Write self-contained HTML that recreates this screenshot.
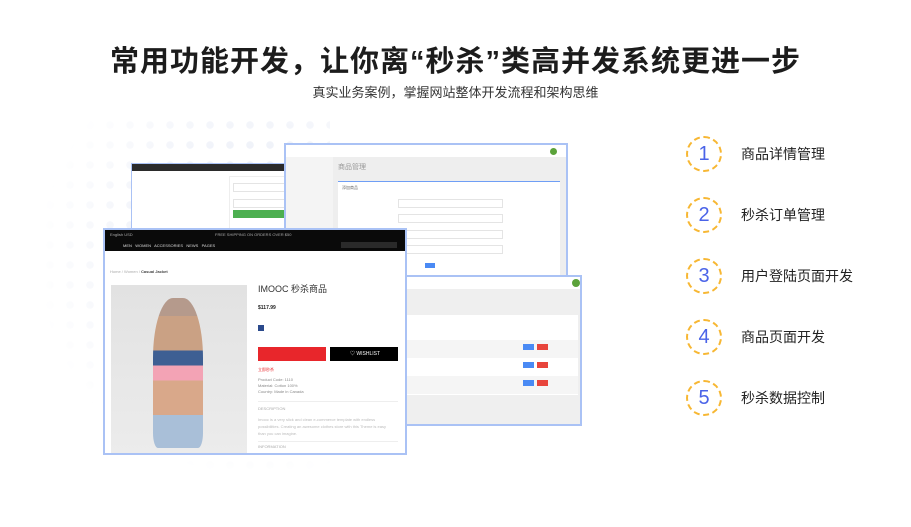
<!DOCTYPE html>
<html><head><meta charset="utf-8"><style>
*{margin:0;padding:0;box-sizing:border-box}
body{width:911px;height:527px;background:#fff;position:relative;overflow:hidden;font-family:"Liberation Sans","Noto Sans CJK SC",sans-serif;color:#222}
.a{position:absolute}
h1{position:absolute;top:38px;left:0;width:911px;text-align:center;font-size:29px;font-weight:bold;color:#1c1c1c;letter-spacing:1px}
.sub{position:absolute;top:82px;left:0;width:911px;text-align:center;font-size:13px;color:#333}
.dots{left:40px;top:115px;width:290px;height:360px;background:radial-gradient(circle,#edf0f8 3.5px,transparent 4px) 0 0/20px 20px;-webkit-mask:radial-gradient(ellipse at 75% 40%,#000 30%,transparent 72%)}
.win{position:absolute;background:#fff;border:2px solid #aac2f5;overflow:hidden}
.c{position:absolute;width:36px;height:36px;border:2px dashed #f7b733;border-radius:50%;left:686px;text-align:center;line-height:32px;font-size:20px;color:#4a63e8}
.t{position:absolute;left:741px;font-size:14px;color:#222}
.f{position:absolute;height:9px;border:1px solid #e4e4e4;background:#fff}
.s{position:absolute;font-size:4px;color:#888;white-space:nowrap}
</style></head><body>
<h1>常用功能开发，让你离“秒杀”类高并发系统更进一步</h1>
<div class="sub">真实业务案例，掌握网站整体开发流程和架构思维</div>
<div class="a dots"></div>

<div class="win" style="left:131px;top:163px;width:160px;height:70px;border-width:1px">
 <div class="a" style="left:0;top:0;width:160px;height:7px;background:#2b2b2b"></div>
 <div class="a" style="left:97px;top:12px;width:60px;height:55px;border:1px solid #eee"></div>
 <div class="f" style="left:101px;top:19px;width:55px"></div>
 <div class="f" style="left:101px;top:35px;width:55px"></div>
 <div class="a" style="left:101px;top:46px;width:55px;height:8px;background:#4caf50"></div>
</div>

<div class="win" style="left:284px;top:143px;width:284px;height:136px">
 <div class="a" style="left:0;top:12px;width:47px;height:124px;background:#f4f4f4"></div>
 <div class="a" style="left:47px;top:12px;width:235px;height:124px;background:#eeeeee"></div>
 <div class="a" style="left:52px;top:36px;width:222px;height:100px;background:#fff;border-top:1px solid #6f9ef5"></div>
 <div class="s" style="left:52px;top:17px;font-size:7px;color:#999">商品管理</div>
 <div class="s" style="left:56px;top:40px;color:#666">添加商品</div>
 <div class="f" style="left:112px;top:54px;width:105px"></div>
 <div class="f" style="left:112px;top:69px;width:105px"></div>
 <div class="f" style="left:112px;top:85px;width:105px"></div>
 <div class="f" style="left:112px;top:100px;width:105px"></div>
 <div class="a" style="left:139px;top:118px;width:10px;height:5px;background:#4a8af4"></div>
 <div class="a" style="left:264px;top:3px;width:7px;height:7px;border-radius:50%;background:#5ba23a"></div>
</div>

<div class="win" style="left:404px;top:275px;width:178px;height:151px">
 <div class="a" style="left:0;top:12px;width:178px;height:139px;background:#efefef"></div>
 <div class="a" style="left:0;top:38px;width:172px;height:80px;background:#fff"></div>
 <div class="a" style="left:0;top:63px;width:172px;height:18px;background:#f5f5f5"></div>
 <div class="a" style="left:0;top:99px;width:172px;height:18px;background:#f5f5f5"></div>
 <div class="a" style="left:117px;top:67px;width:11px;height:6px;background:#4a8af4"></div><div class="a" style="left:131px;top:67px;width:11px;height:6px;background:#e8453c"></div>
 <div class="a" style="left:117px;top:85px;width:11px;height:6px;background:#4a8af4"></div><div class="a" style="left:131px;top:85px;width:11px;height:6px;background:#e8453c"></div>
 <div class="a" style="left:117px;top:103px;width:11px;height:6px;background:#4a8af4"></div><div class="a" style="left:131px;top:103px;width:11px;height:6px;background:#e8453c"></div>
 <div class="a" style="left:166px;top:2px;width:8px;height:8px;border-radius:50%;background:#5ba23a"></div>
</div>

<div class="win" style="left:103px;top:228px;width:304px;height:227px">
 <div class="a" style="left:0;top:0;width:304px;height:21px;background:#0a0a0a"></div>
 <div class="s" style="left:5px;top:2px;color:#aaa">English USD</div>
 <div class="s" style="left:110px;top:2px;color:#aaa">FREE SHIPPING ON ORDERS OVER $50</div>
 <div class="s" style="left:18px;top:13px;color:#ddd">MEN&nbsp;&nbsp; WOMEN&nbsp;&nbsp; ACCESSORIES&nbsp;&nbsp; NEWS&nbsp;&nbsp; PAGES</div>
 <div class="a" style="left:236px;top:12px;width:56px;height:6px;background:#2a2a2a"></div>
 <div class="s" style="left:5px;top:39px;color:#aaa">Home / Women / <b style="color:#444">Casual Jacket</b></div>
 <div class="a" style="left:6px;top:55px;width:136px;height:172px;background:linear-gradient(#e2e2e2,#ececec)"></div>
 <div class="a" style="left:48px;top:68px;width:50px;height:150px;border-radius:40% 40% 10% 10%;background:linear-gradient(#b59a8c 0 12%,#caa184 12% 35%,#3e5f93 35% 45%,#f3a3b5 45% 55%,#d9a88a 55% 78%,#a9bfd8 78%)"></div>
 <div class="s" style="left:153px;top:52px;font-size:9px;color:#333">IMOOC 秒杀商品</div>
 <div class="s" style="left:153px;top:75px;font-size:5px;color:#222;font-weight:bold">$117.99</div>
 <div class="a" style="left:153px;top:95px;width:6px;height:6px;background:#2b4a8c"></div>
 <div class="a" style="left:153px;top:117px;width:68px;height:14px;background:#e8262b"></div>
 <div class="a" style="left:225px;top:117px;width:68px;height:14px;background:#000"></div>
 <div class="s" style="left:245px;top:120px;color:#fff;font-size:5px">♡ WISHLIST</div>
 <div class="s" style="left:153px;top:137px;color:#e8262b">立即秒杀</div>
 <div class="s" style="left:153px;top:147px;line-height:6px">Product Code: 1110<br>Material: Cotton 100%<br>Country: Made in Canada</div>
 <div class="a" style="left:153px;top:171px;width:140px;height:1px;background:#eee"></div>
 <div class="s" style="left:153px;top:176px;color:#aaa">DESCRIPTION</div>
 <div class="s" style="left:153px;top:186px;color:#bbb;line-height:7px">Imooc is a very slick and clean e-commerce template with endless<br>possibilities. Creating an awesome clothes store with this Theme is easy<br>than you can imagine.</div>
 <div class="a" style="left:153px;top:211px;width:140px;height:1px;background:#eee"></div>
 <div class="s" style="left:153px;top:214px;color:#aaa">INFORMATION</div>
</div>

<div class="c" style="top:136px">1</div><div class="t" style="top:144px">商品详情管理</div>
<div class="c" style="top:197px">2</div><div class="t" style="top:205px">秒杀订单管理</div>
<div class="c" style="top:258px">3</div><div class="t" style="top:266px">用户登陆页面开发</div>
<div class="c" style="top:319px">4</div><div class="t" style="top:327px">商品页面开发</div>
<div class="c" style="top:380px">5</div><div class="t" style="top:388px">秒杀数据控制</div>
</body></html>
